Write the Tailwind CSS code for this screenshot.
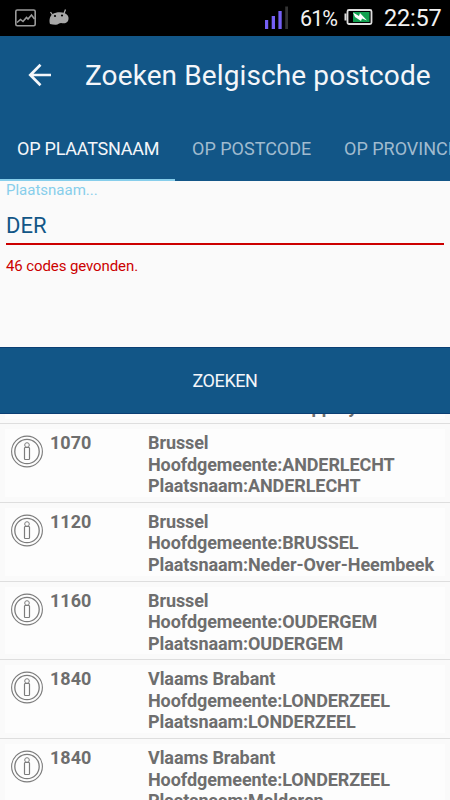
<!DOCTYPE html>
<html lang="nl">
<head>
  <meta charset="UTF-8" />
  <meta name="viewport" content="width=device-width, initial-scale=1.0" />
  <title>Zoeken Belgische postcode</title>
  <script src="https://cdn.jsdelivr.net/npm/@tailwindcss/browser@4"></script>
</head>
<body class="w-[450px] h-[800px] overflow-hidden flex flex-col bg-[#fafafa] font-['Roboto',sans-serif]">
  <!-- Status bar -->
  <div class="h-[36px] shrink-0 bg-black flex items-center text-[#f2f2f2]">
    <svg class="ml-[15px] w-[21px] h-[18px] shrink-0" viewBox="0 0 21 18" fill="none" stroke="#9a9a9a" stroke-width="1.6">
      <rect x="0.8" y="1" width="19.4" height="15.8" rx="1.5" />
      <path d="M2 13.5l3.5-3 2.5 2 3.5-4 1.5 1.5 3.5-4 3 4" />
    </svg>
    <svg class="ml-[13px] mt-[-2px] w-[21px] h-[18px] shrink-0" viewBox="0 0 21 18">
      <path d="M1.5 4l2 3M16.500 1.500l-1.500 4" stroke="#a8a8a8" stroke-width="1.3" />
      <path d="M1 16C0 12.500 0.500 8.500 3.500 6 7 4 12 3.800 15.500 5 19 6.500 20.500 9.500 19 13 17.500 15.500 15 15.500 12 15 10.500 15 9 16.500 7 16.800 5 17 3 16.300 1 16Z" fill="#a8a8a8" />
      <circle cx="6" cy="8" r="1.1" /><circle cx="13" cy="7.500" r="1.1" />
    </svg>
    <svg class="ml-[195px] mt-[-3px] w-[24px] h-[24px] shrink-0" viewBox="0 0 24 24">
      <path d="M0 15h3.200v9H0zM6.700 11H10v13H6.700zM13.400 6h3.300v18h-3.300z" fill="#7560f5" />
      <path d="M20.200 1.500h2.800V24h-2.800z" fill="#333" />
    </svg>
    <span class="ml-[11px] mt-[3px] w-[44px] text-[21.5px] tracking-[-0.900px]">61%</span>
    <svg class="mt-[-3px] w-[29px] h-[18px] shrink-0" viewBox="0 0 29 18">
      <path d="M0.500 5.500h2v7h-2z" fill="#ddd" />
      <rect x="3.500" y="2" width="24" height="14" rx="1.500" fill="#000" stroke="#ddd" stroke-width="1.800" />
      <path d="M9 4h16.500v10H9z" fill="#12a150" />
      <path d="M9 4.500l6 3.500 1-3 7 7.500-5-2-1 2.500-6-4Z" fill="#fff" />
    </svg>
    <span class="ml-[11px] mt-[2px] text-[23.5px] tracking-[-0.200px] whitespace-nowrap">22:57</span>
  </div>

  <!-- App bar -->
  <div class="h-[79px] shrink-0 bg-[#125687] flex items-center">
    <svg class="ml-[28px] mt-[-1px] w-[24px] h-[24px] shrink-0" viewBox="0 0 24 24" fill="none" stroke="#f4f6fa" stroke-width="2.7">
      <path d="M23 12H2.500M12.500 1.800L2.300 12l10.200 10.200" />
    </svg>
    <h1 class="ml-[33px] text-[28px] tracking-[0.110px] text-[#f4f6fa] whitespace-nowrap">Zoeken Belgische postcode</h1>
  </div>

  <!-- Tabs -->
  <div class="h-[66px] shrink-0 bg-[#125687] flex overflow-hidden text-[18px] leading-[67px] whitespace-nowrap text-[#a0bbcf]">
    <div class="w-[175px] shrink-0 pl-[17px] tracking-[-0.230px] text-[#f4f6fa] border-b-2 border-[#87ceeb]">OP PLAATSNAAM</div>
    <div class="w-[153px] shrink-0 pl-[17px]">OP POSTCODE</div>
    <div class="shrink-0 pl-[16px]">OP PROVINCIE</div>
  </div>

  <!-- Search form -->
  <div class="h-[166px] shrink-0 px-[6px] flex flex-col">
    <label class="text-[15px] leading-[19px] text-[#87ceeb]">Plaatsnaam...</label>
    <div class="mt-[12px] h-[33px] text-[22px] leading-[28px] text-[#125687] border-b-2 border-[#cc0000]">DER</div>
    <p class="mt-[11px] text-[15px] leading-[20px] tracking-[-0.100px] text-[#cc0000]">46 codes gevonden.</p>
  </div>
  <div class="h-[67px] shrink-0 bg-[#125687] border-y border-[#0b3f74] flex items-center justify-center text-[18px] tracking-[-0.400px] text-[#f4f6fa]">ZOEKEN</div>

  <!-- Results -->
  <div id="results" class="flex-1 min-h-0 overflow-hidden flex flex-col text-[18px] leading-[21.6px] font-bold text-[#6e6e6e]"></div>

  <script>
    const results = [
      { code: "1070", prov: "Brussel", gem: "ANDERLECHT", plaats: "ANDERLECHT" },
      { code: "1120", prov: "Brussel", gem: "BRUSSEL", plaats: "Neder-Over-Heembeek" },
      { code: "1160", prov: "Brussel", gem: "OUDERGEM", plaats: "OUDERGEM" },
      { code: "1840", prov: "Vlaams Brabant", gem: "LONDERZEEL", plaats: "LONDERZEEL" },
      { code: "1840", prov: "Vlaams Brabant", gem: "LONDERZEEL", plaats: "Malderen" }
    ];

    const icon = `<svg class="ml-[6px] mt-[5px] w-[32px] h-[34px] shrink-0" viewBox="0 0 32 34" fill="none" stroke="#7c7c7c">
      <circle cx="16" cy="17.5" r="15.4" stroke-width="1.1" /><circle cx="16" cy="17.5" r="12.2" stroke-width="1.3" />
      <circle cx="16" cy="11" r="2.3" /><rect x="13.5" y="13.5" width="5" height="12" rx="0.8" stroke-width="1.2" /></svg>`;

    // tail of the row scrolled under the button
    let html = `<div class="h-[10px] shrink-0 border-b border-[#dedede] px-[5px]">
      <div class="h-[5px] bg-[#fdfdfd] overflow-hidden flex flex-col justify-end pl-[143px]">
        <div class="shrink-0 whitespace-nowrap mb-[1px]">Plaatsnaam:Kinderoppary</div>
      </div></div>`;
    results.forEach(r => {
      html += `<div class="h-[78.75px] shrink-0 border-b border-[#dedede] px-[5px] py-[5px]">
        <div class="h-full bg-[#fdfdfd] flex items-start">${icon}
          <div class="ml-[7px] mt-[3px] w-[98px] shrink-0">${r.code}</div>
          <div class="mt-[3px] whitespace-nowrap tracking-[-0.090px]">${r.prov}<br>Hoofdgemeente:${r.gem}<br>Plaatsnaam:${r.plaats}</div>
        </div></div>`;
    });
    document.getElementById("results").innerHTML = html;
  </script>
</body>
</html>
